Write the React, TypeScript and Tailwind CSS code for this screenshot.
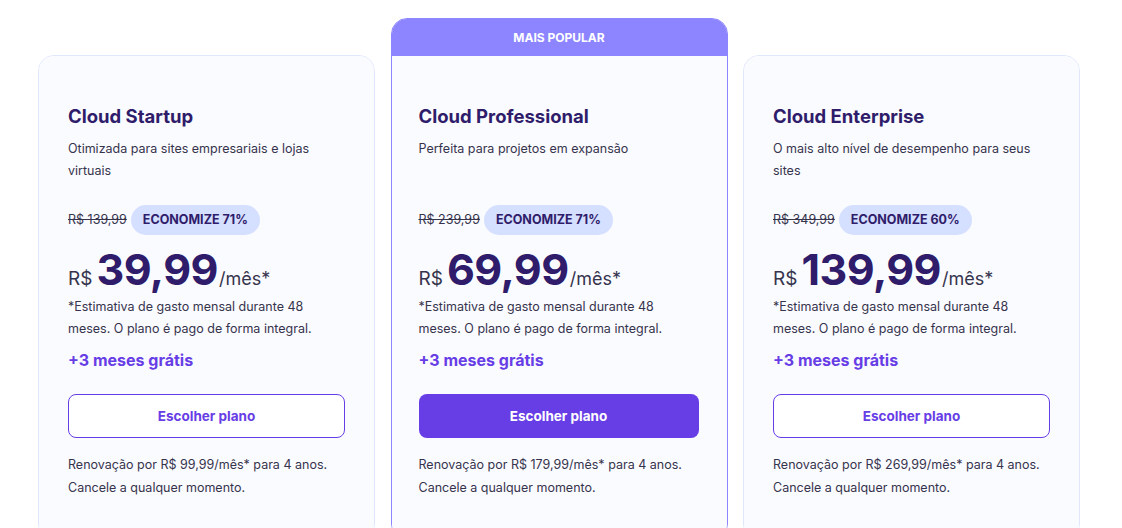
import React from 'react';

type Plan = {
  name: string;
  desc: string;
  old: string;
  save: string;
  price: string;
  renew: string;
  popular?: boolean;
};

const plans: Plan[] = [
  {
    name: 'Cloud Startup',
    desc: 'Otimizada para sites empresariais e lojas virtuais',
    old: 'R$ 139,99',
    save: 'ECONOMIZE 71%',
    price: '39,99',
    renew: 'R$ 99,99',
  },
  {
    name: 'Cloud Professional',
    desc: 'Perfeita para projetos em expansão',
    old: 'R$ 239,99',
    save: 'ECONOMIZE 71%',
    price: '69,99',
    renew: 'R$ 179,99',
    popular: true,
  },
  {
    name: 'Cloud Enterprise',
    desc: 'O mais alto nível de desempenho para seus sites',
    old: 'R$ 349,99',
    save: 'ECONOMIZE 60%',
    price: '139,99',
    renew: 'R$ 269,99',
  },
];

function PlanCard({ plan }: { plan: Plan }) {
  return (
    <div
      className={
        'flex w-[337px] flex-col overflow-hidden rounded-2xl border ' +
        (plan.popular ? 'border-[#8c85ff]' : 'mt-[37px] border-[#e0e7fd]')
      }
    >
      {plan.popular && (
        <div className="flex h-[37px] items-center justify-center bg-[#8c85ff] text-[12px] font-bold text-white">
          MAIS POPULAR
        </div>
      )}
      <div
        className={
          'flex flex-col bg-[#fafbff] pt-[46px] pb-10 ' + (plan.popular ? 'pr-[28px] pl-[27px]' : 'px-[29px]')
        }
      >
        <h3 className="text-[18.5px] leading-[28px] font-bold text-[#2f1c6a]">{plan.name}</h3>
        <p className="mt-[8px] min-h-[44px] text-[12.5px] leading-[22px] text-[#36344d]">{plan.desc}</p>
        <div className="mt-[23px] flex items-center gap-1">
          <span className="text-[12.5px] text-[#36344d] line-through">{plan.old}</span>
          <span className="rounded-full bg-[#d5dfff] px-3 py-[6px] text-[12.5px] leading-[18px] font-bold text-[#2f1c6a]">
            {plan.save}
          </span>
        </div>
        <div className="mt-[9px] flex items-baseline text-[#2f1c6a]">
          <span className="mr-[4px] text-[19px] text-[#36344d]">R$</span>
          <span className="text-[43px] leading-[50px] font-bold tracking-[-0.5px]">{plan.price}</span>
          <span className="ml-[1px] text-[18px] text-[#36344d]">/mês*</span>
        </div>
        <p className="mt-[2px] text-[12.5px] leading-[22px] text-[#36344d]">
          *Estimativa de gasto mensal durante 48 meses. O plano é pago de forma integral.
        </p>
        <p className="mt-[8px] text-[16px] leading-[24px] font-bold text-[#673de6]">+3 meses grátis</p>
        <button
          className={
            'mt-[22px] h-[44px] w-full rounded-lg text-[13.5px] font-bold ' +
            (plan.popular
              ? 'bg-[#673de6] text-white'
              : 'border-[1.5px] border-[#673de6] bg-white text-[#673de6]')
          }
        >
          Escolher plano
        </button>
        <p className="mt-[15px] text-[12.5px] leading-[23px] text-[#36344d]">
          Renovação por {plan.renew}/mês* para 4 anos. Cancele a qualquer momento.
        </p>
      </div>
    </div>
  );
}

export default function App() {
  return (
    <div className="h-[528px] w-[1122px] overflow-hidden bg-white font-['Inter','Noto_Sans',sans-serif]">
      <div className="flex gap-[15.5px] pt-[18px] pl-[38px]">
        {plans.map((p) => (
          <PlanCard key={p.name} plan={p} />
        ))}
      </div>
    </div>
  );
}
